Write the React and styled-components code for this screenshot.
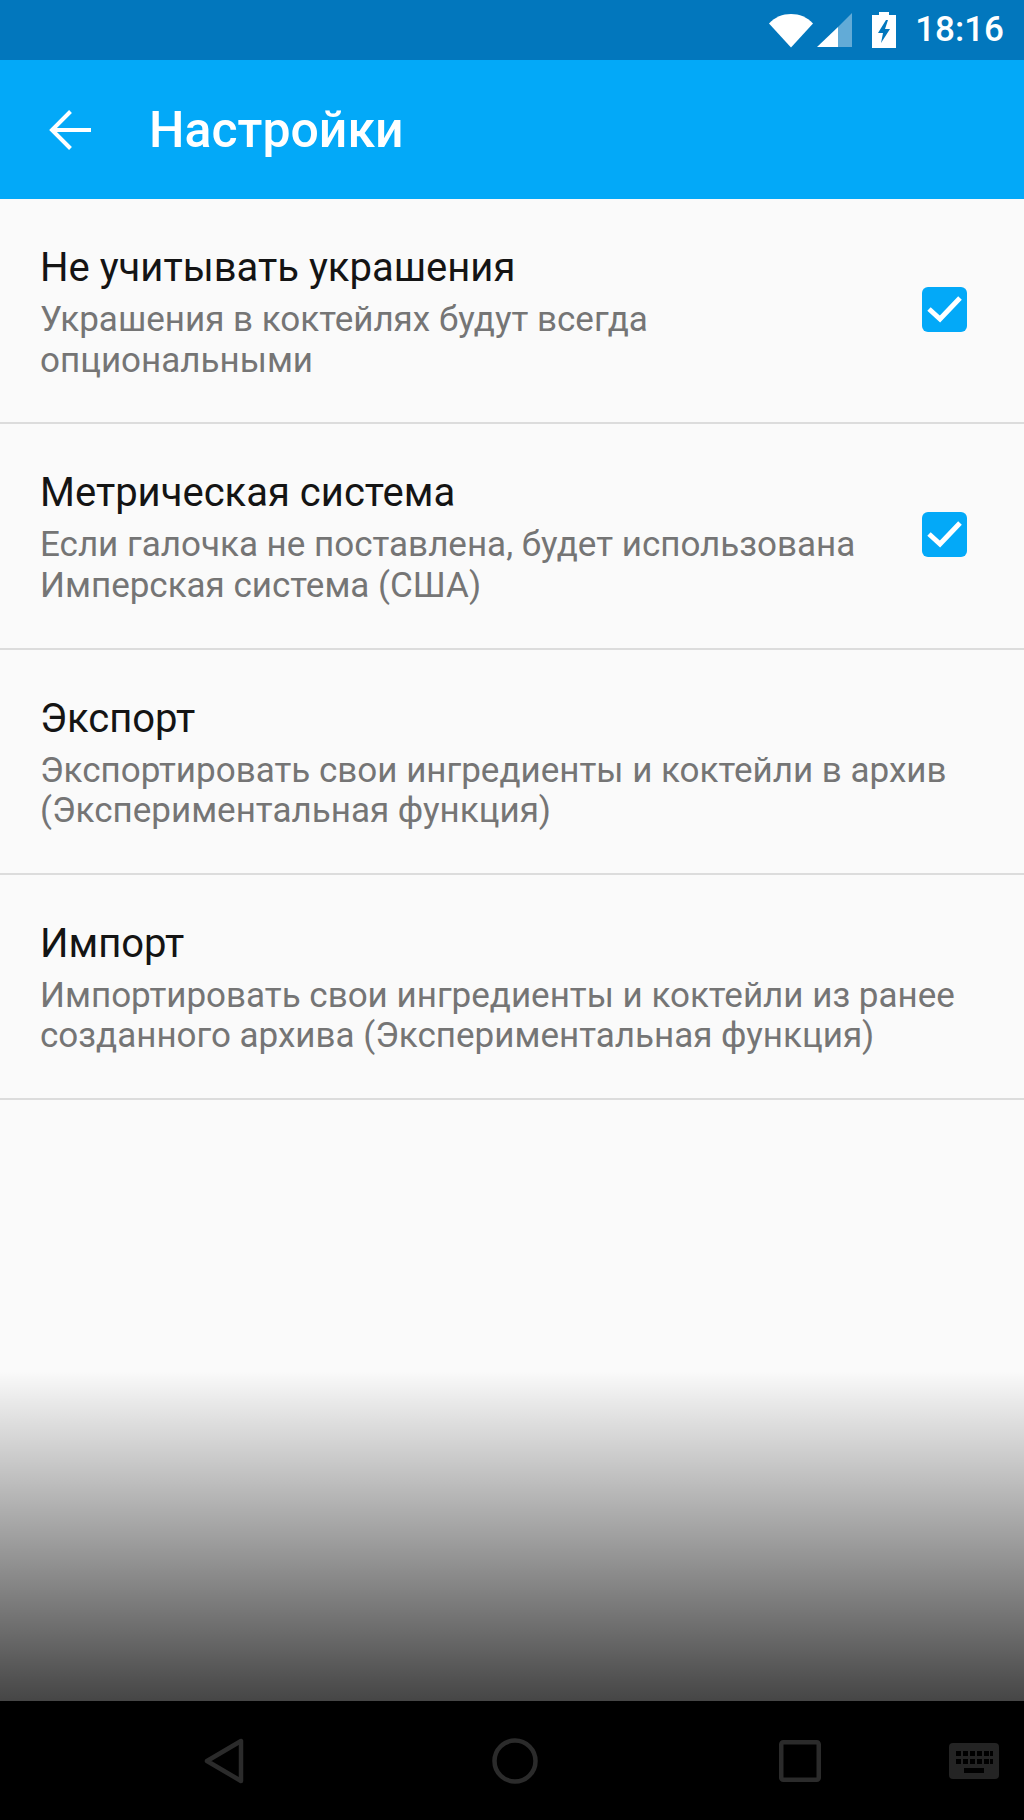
import React from "react";
import styled, { createGlobalStyle } from "styled-components";

const GlobalStyle = createGlobalStyle`
  html, body {
    margin: 0;
    padding: 0;
    background: #fafafa;
  }
`;

const Screen = styled.div`
  display: flex;
  flex-direction: column;
  width: 1024px;
  height: 1820px;
  overflow: hidden;
  background: #fafafa;
  font-family: Roboto, "Noto Sans", sans-serif;
`;

const StatusBar = styled.div`
  display: flex;
  align-items: center;
  justify-content: flex-end;
  flex: none;
  height: 60px;
  padding-right: 20px;
  box-sizing: border-box;
  background: #0277bd;
`;

const StatusIcon = styled.svg`
  display: block;
  flex: none;
  margin-right: ${(p) => p.$gap}px;
`;

const Clock = styled.span`
  font-size: 35px;
  font-weight: 500;
  color: #fff;
  line-height: 60px;
`;

const AppBar = styled.header`
  display: flex;
  align-items: center;
  flex: none;
  height: 139px;
  padding-left: 48px;
  box-sizing: border-box;
  background: #03a9f8;
`;

const BackIcon = styled.svg`
  display: block;
  flex: none;
  margin-right: 57px;
`;

const Title = styled.h1`
  margin: 0;
  font-size: 50px;
  font-weight: 500;
  color: #fff;
`;

const List = styled.div`
  flex: none;
`;

const Row = styled.div`
  display: flex;
  align-items: flex-start;
  height: 225.3px;
  padding: 47px 57px 0 40px;
  box-sizing: border-box;
  border-bottom: 2px solid #dcdcdc;
`;

const RowText = styled.div`
  flex: 1;
  min-width: 0;
  white-space: pre;
`;

const RowTitle = styled.div`
  font-size: 40px;
  line-height: 44px;
  color: #141414;
`;

const RowSummary = styled.div`
  margin-top: 10px;
  font-size: 35px;
  line-height: 40.5px;
  color: #757575;
`;

const CheckBox = styled.svg`
  display: block;
  flex: none;
  margin-top: 41px;
`;

const Filler = styled.div`
  display: flex;
  flex-direction: column;
  justify-content: flex-end;
  flex: 1;
`;

const Shade = styled.div`
  height: 330px;
  background: linear-gradient(to bottom, rgba(0, 0, 0, 0), rgba(0, 0, 0, 0.72));
`;

const NavBar = styled.nav`
  flex: none;
  height: 119px;
  display: grid;
  grid-template-columns: 204px 40px 248px 42px 245px 44px 126px 50px 25px;
  align-items: center;
  background: #000;
`;

const NavIcon = styled.svg`
  display: block;
  grid-column: ${(p) => p.$col};
`;

const settings = [
  {
    title: "Не учитывать украшения",
    summary: "Украшения в коктейлях будут всегда\nопциональными",
    checked: true,
  },
  {
    title: "Метрическая система",
    summary: "Если галочка не поставлена, будет использована\nИмперская система (США)",
    checked: true,
  },
  {
    title: "Экспорт",
    summary: "Экспортировать свои ингредиенты и коктейли в архив\n(Экспериментальная функция)",
  },
  {
    title: "Импорт",
    summary: "Импортировать свои ингредиенты и коктейли из ранее\nсозданного архива (Экспериментальная функция)",
  },
];

export default function App() {
  return (
    <Screen>
      <GlobalStyle />
      <StatusBar>
        <StatusIcon $gap={4} width="44" height="35" viewBox="0 0 44 35">
          <path d="M0 10.500C6 4 13.500 1 22 1s16 3 22 9.500L22 34.500z" fill="#fff" />
        </StatusIcon>
        <StatusIcon $gap={20} width="35" height="34" viewBox="0 0 35 34">
          <path d="M35 0v34H21V14z" fill="#62abd7" />
          <path d="M21 14v20H0z" fill="#fff" />
        </StatusIcon>
        <StatusIcon $gap={19} width="24" height="36" viewBox="0 0 24 36">
          <path
            fillRule="evenodd"
            d="M7 0h10v3h7v33H0V3h7zM14 8 6 21h5l-2 10 9-14h-5l3-9z"
            fill="#fff"
          />
        </StatusIcon>
        <Clock>18:16</Clock>
      </StatusBar>

      <AppBar>
        <BackIcon width="44" height="42" viewBox="0 0 44 42">
          <path
            d="M43 21H5M22.500 2.500 4 21l18.500 18.500"
            fill="none"
            stroke="#fff"
            strokeWidth="4"
          />
        </BackIcon>
        <Title>Настройки</Title>
      </AppBar>

      <List>
        {settings.map((item) => (
          <Row key={item.title}>
            <RowText>
              <RowTitle>{item.title}</RowTitle>
              <RowSummary>{item.summary}</RowSummary>
            </RowText>
            {item.checked && (
              <CheckBox width="45" height="45" viewBox="0 0 45 45">
                <rect width="45" height="45" rx="6" fill="#03a9f8" />
                <path d="M7 22l11 10L38 11" fill="none" stroke="#fff" strokeWidth="5" />
              </CheckBox>
            )}
          </Row>
        ))}
      </List>

      <Filler>
        <Shade />
      </Filler>

      <NavBar>
        <NavIcon $col={2} width="40" height="46" viewBox="0 0 40 46">
          <path
            d="M37 3v40L3 23z"
            fill="none"
            stroke="#2b2b2b"
            strokeWidth="4.500"
            strokeLinejoin="round"
          />
        </NavIcon>
        <NavIcon $col={4} width="46" height="46" viewBox="0 0 46 46">
          <circle cx="23" cy="23" r="20.500" fill="none" stroke="#2b2b2b" strokeWidth="4.500" />
        </NavIcon>
        <NavIcon $col={6} width="42" height="42" viewBox="0 0 42 42">
          <rect x="2.250" y="2.250" width="37.500" height="37.500" rx="2" fill="none" stroke="#2b2b2b" strokeWidth="4.500" />
        </NavIcon>
        <NavIcon $col={8} width="50" height="36" viewBox="0 0 50 36">
          <rect width="50" height="36" rx="4" fill="#242424" />
          <g fill="#000">
            <rect x="7" y="8" width="5" height="5" />
            <rect x="14" y="8" width="5" height="5" />
            <rect x="21" y="8" width="5" height="5" />
            <rect x="28" y="8" width="5" height="5" />
            <rect x="35" y="8" width="5" height="5" />
            <rect x="41" y="8" width="3" height="5" />
            <rect x="7" y="16" width="5" height="5" />
            <rect x="14" y="16" width="5" height="5" />
            <rect x="21" y="16" width="5" height="5" />
            <rect x="28" y="16" width="5" height="5" />
            <rect x="35" y="16" width="5" height="5" />
            <rect x="41" y="16" width="3" height="5" />
            <rect x="15" y="25" width="20" height="5" />
          </g>
        </NavIcon>
      </NavBar>
    </Screen>
  );
}
